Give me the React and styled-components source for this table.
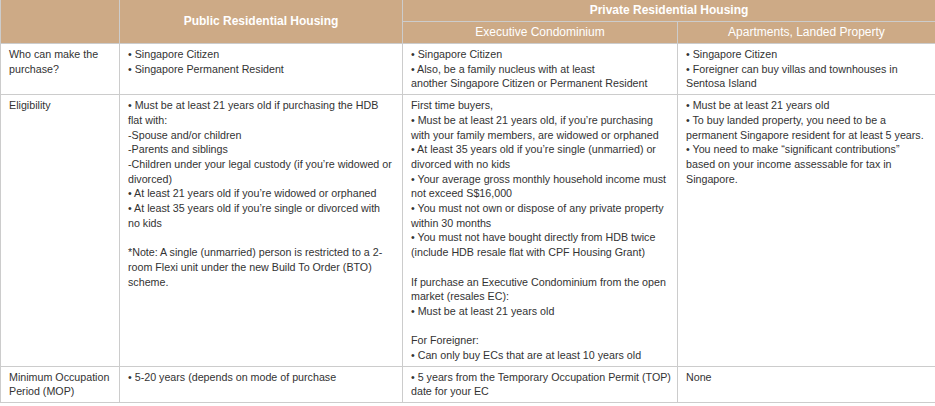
import styled, { createGlobalStyle } from 'styled-components';

const GlobalStyle = createGlobalStyle`
  html, body {
    margin: 0;
    padding: 0;
    background: #fff;
  }
  body {
    font-family: 'Liberation Sans', Arial, sans-serif;
  }
`;

const Table = styled.table`
  width: 935px;
  border-collapse: collapse;
  table-layout: fixed;
  font-size: 10.7px;
  line-height: 14.7px;
  color: #333;
`;

const Th = styled.th`
  background: #cdaa86;
  color: #fff;
  font-size: 12px;
  font-weight: ${(p) => (p.$bold ? 'bold' : 'normal')};
  text-align: center;
  vertical-align: middle;
  border: 1px solid #ccc;
  border-top: none;
  height: 21px;
  padding: 0 8px;
`;

const Td = styled.td`
  border: 1px solid #ccc;
  vertical-align: top;
  padding: 3px 7px 3px 8px;
  overflow: hidden;
`;

const Line = styled.div`
  min-height: 14.7px;
  white-space: nowrap;
`;

const Cell = ({ lines }) => (
  <Td>
    {lines.map((l, i) => (
      <Line key={i}>{l}</Line>
    ))}
  </Td>
);

const rows = [
  {
    label: ['Who can make the', 'purchase?'],
    cols: [
      ['• Singapore Citizen', '• Singapore Permanent Resident'],
      [
        '• Singapore Citizen',
        '• Also, be a family nucleus with at least',
        'another Singapore Citizen or Permanent Resident',
      ],
      [
        '• Singapore Citizen',
        '• Foreigner can buy villas and townhouses in',
        'Sentosa Island',
      ],
    ],
  },
  {
    label: ['Eligibility'],
    cols: [
      [
        '• Must be at least 21 years old if purchasing the HDB',
        'flat with:',
        '-Spouse and/or children',
        '-Parents and siblings',
        '-Children under your legal custody (if you’re widowed or',
        'divorced)',
        '• At least 21 years old if you’re widowed or orphaned',
        '• At least 35 years old if you’re single or divorced with',
        'no kids',
        '',
        '*Note: A single (unmarried) person is restricted to a 2-',
        'room Flexi unit under the new Build To Order (BTO)',
        'scheme.',
      ],
      [
        'First time buyers,',
        '• Must be at least 21 years old, if you’re purchasing',
        'with your family members, are widowed or orphaned',
        '• At least 35 years old if you’re single (unmarried) or',
        'divorced with no kids',
        '• Your average gross monthly household income must',
        'not exceed S$16,000',
        '• You must not own or dispose of any private property',
        'within 30 months',
        '• You must not have bought directly from HDB twice',
        '(include HDB resale flat with CPF Housing Grant)',
        '',
        'If purchase an Executive Condominium from the open',
        'market (resales EC):',
        '• Must be at least 21 years old',
        '',
        'For Foreigner:',
        '• Can only buy ECs that are at least 10 years old',
      ],
      [
        '• Must be at least 21 years old',
        '• To buy landed property, you need to be a',
        'permanent Singapore resident for at least 5 years.',
        '• You need to make “significant contributions”',
        'based on your income assessable for tax in',
        'Singapore.',
      ],
    ],
  },
  {
    label: ['Minimum Occupation', 'Period (MOP)'],
    cols: [
      ['• 5-20 years (depends on mode of purchase'],
      ['• 5 years from the Temporary Occupation Permit (TOP)', 'date for your EC'],
      ['None'],
    ],
  },
];

export default function App() {
  return (
    <>
      <GlobalStyle />
      <Table>
        <colgroup>
          <col style={{ width: 119 }} />
          <col style={{ width: 283 }} />
          <col style={{ width: 275 }} />
          <col style={{ width: 258 }} />
        </colgroup>
        <thead>
          <tr>
            <Th rowSpan={2} />
            <Th rowSpan={2} $bold>
              Public Residential Housing
            </Th>
            <Th colSpan={2} $bold>
              Private Residential Housing
            </Th>
          </tr>
          <tr>
            <Th>Executive Condominium</Th>
            <Th>Apartments, Landed Property</Th>
          </tr>
        </thead>
        <tbody>
          {rows.map((r, i) => (
            <tr key={i}>
              <Cell lines={r.label} />
              {r.cols.map((c, j) => (
                <Cell key={j} lines={c} />
              ))}
            </tr>
          ))}
        </tbody>
      </Table>
    </>
  );
}
